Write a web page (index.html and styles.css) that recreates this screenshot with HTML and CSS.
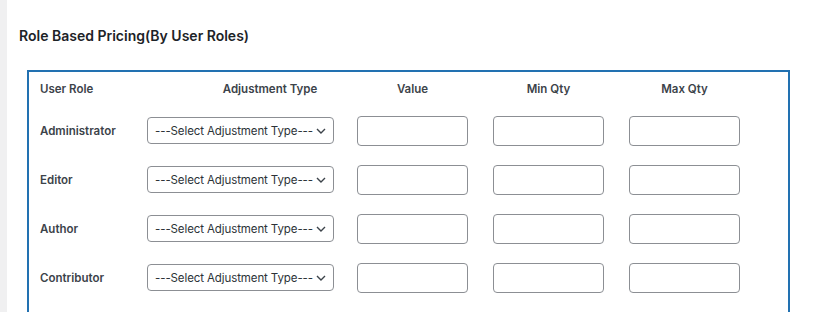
FILE: index.html
```html
<!DOCTYPE html>
<html>
<head>
<meta charset="utf-8">
<link rel="stylesheet" href="styles.css">
</head>
<body>
<div class="page">
  <div class="sidebar-edge"></div>
  <main class="content">
    <h2 class="title">Role Based Pricing(By User Roles)</h2>
    <div class="pricing-box">
      <div class="pricing-grid">
        <div class="th th-role">User Role</div>
        <div class="th th-adj">Adjustment Type</div>
        <div class="th th-num">Value</div>
        <div class="th th-num">Min Qty</div>
        <div class="th th-num">Max Qty</div>

        <div class="role">Administrator</div>
        <div class="select-wrap"><select class="adj-select"><option>---Select Adjustment Type---</option></select><svg class="chev" width="10" height="6" viewBox="0 0 10 6"><path d="M1 1l4 4 4-4" fill="none" stroke="#3c434a" stroke-width="1.4"/></svg></div>
        <input class="num" type="text">
        <input class="num" type="text">
        <input class="num" type="text">

        <div class="role">Editor</div>
        <div class="select-wrap"><select class="adj-select"><option>---Select Adjustment Type---</option></select><svg class="chev" width="10" height="6" viewBox="0 0 10 6"><path d="M1 1l4 4 4-4" fill="none" stroke="#3c434a" stroke-width="1.4"/></svg></div>
        <input class="num" type="text">
        <input class="num" type="text">
        <input class="num" type="text">

        <div class="role">Author</div>
        <div class="select-wrap"><select class="adj-select"><option>---Select Adjustment Type---</option></select><svg class="chev" width="10" height="6" viewBox="0 0 10 6"><path d="M1 1l4 4 4-4" fill="none" stroke="#3c434a" stroke-width="1.4"/></svg></div>
        <input class="num" type="text">
        <input class="num" type="text">
        <input class="num" type="text">

        <div class="role">Contributor</div>
        <div class="select-wrap"><select class="adj-select"><option>---Select Adjustment Type---</option></select><svg class="chev" width="10" height="6" viewBox="0 0 10 6"><path d="M1 1l4 4 4-4" fill="none" stroke="#3c434a" stroke-width="1.4"/></svg></div>
        <input class="num" type="text">
        <input class="num" type="text">
        <input class="num" type="text">
      </div>
    </div>
  </main>
</div>
</body>
</html>
```
FILE: styles.css
```css
html, body {
  margin: 0;
  padding: 0;
  background: #ffffff;
  height: 100%;
  overflow: hidden;
}
body {
  font-family: Inter, Roboto, "Liberation Sans", sans-serif;
  color: #1d2327;
}
.page {
  display: flex;
  height: 312px;
}
.sidebar-edge {
  width: 7px;
  flex: none;
  background: #f0f0f1;
}
.content {
  flex: 1;
  padding: 0 35px 0 12px;
}
.title {
  margin: 0;
  padding-top: 27px;
  font-size: 14px;
  line-height: 18px;
  font-weight: 600;
  color: #1d2327;
}
.pricing-box {
  margin: 25px 0 0 8px;
  border: 2px solid #2271b1;
  border-bottom: none;
  height: 240px;
}
.pricing-grid {
  display: grid;
  grid-template-columns: 107px 210px 136px 136px 111px;
  grid-template-rows: 34px repeat(4, 49px);
  padding-left: 11px;
  align-items: center;
}
.th {
  font-size: 11.5px;
  font-weight: 600;
  color: #3c434a;
}
.th-adj {
  padding-left: 36px;
  text-align: center;
}
.th-num {
  width: 111px;
  text-align: center;
}
.role {
  font-size: 11.5px;
  font-weight: 600;
  color: #3c434a;
}
.select-wrap {
  position: relative;
  width: 187px;
  height: 27px;
}
.adj-select {
  appearance: none;
  -webkit-appearance: none;
  box-sizing: border-box;
  width: 187px;
  height: 27px;
  margin: 0;
  padding: 0 4px 0 7px;
  border: 1px solid #8c8f94;
  border-radius: 4px;
  background: #ffffff;
  font-family: inherit;
  font-size: 11.5px;
  letter-spacing: -0.1px;
  color: #2c3338;
}
.chev {
  position: absolute;
  right: 8px;
  top: 11px;
  pointer-events: none;
}
.num {
  box-sizing: border-box;
  width: 111px;
  height: 30px;
  margin: 0;
  border: 1px solid #8c8f94;
  border-radius: 4px;
  background: #ffffff;
  padding: 0 8px;
}
```
